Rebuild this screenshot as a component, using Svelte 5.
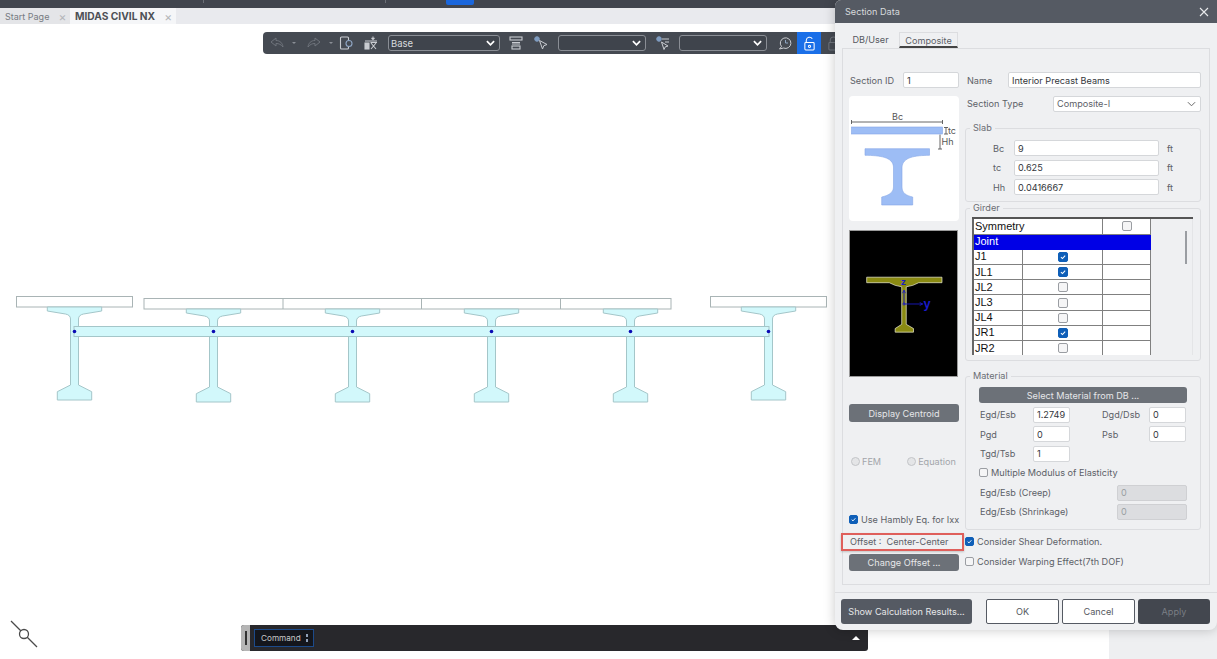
<script>
  const centers = [74.5, 213.5, 352.5, 491.5, 630.5, 768.5];
  const drops = [0, 2, 2, 2, 2, 0];
  const slabCuts = [283, 421.5, 560.5];
  const rows = [
    ['J1', true], ['JL1', true], ['JL2', false], ['JL3', false],
    ['JL4', false], ['JR1', true], ['JR2', false]
  ];

  function girder(c, d) {
    const y = (v) => v + d;
    return `M${c - 27.2} ${y(307)}H${c + 27.2}V${y(311)}L${c + 9} ${y(314)}Q${c + 4} ${y(315)} ${c + 4} ${y(319)}V${y(385)}L${c + 17.2} ${y(391.7)}V${y(400)}H${c - 17.2}V${y(391.7)}L${c - 4} ${y(385)}V${y(319)}Q${c - 4} ${y(315)} ${c - 9} ${y(314)}L${c - 27.2} ${y(311)}Z`;
  }
</script>

{#snippet box(on)}
  <span class="box" class:on>
    {#if on}
      <svg viewBox="0 0 10 10" width="100%" height="100%"><path d="M2.4 5.2 4.3 7 7.7 3.2" fill="none" stroke="#fff" stroke-width="1.3" /></svg>
    {/if}
  </span>
{/snippet}

{#snippet chevron()}
  <svg class="chev" viewBox="0 0 10 6" width="9" height="6"><path d="M1 1 5 5 9 1" fill="none" stroke="#fff" stroke-width="1.9" /></svg>
{/snippet}

<div class="page">
  <div class="topbar">
    <span class="sep s1"></span>
    <span class="sep s2"></span>
    <span class="active"></span>
  </div>

  <div class="tabstrip">
    <div class="doc-tab start">Start Page <span class="x">×</span></div>
    <div class="doc-tab current">MIDAS CIVIL NX <span class="x">×</span></div>
  </div>

  <div class="workspace">
    <main class="viewport">
      <div class="toolbar">
        <svg class="ico" viewBox="0 0 14 12" fill="none" stroke="#6f747c"><path d="M1 5 6 1V3.5C10 3.5 12.5 6 13 10 11 7.5 9 6.5 6 6.5V9Z" /></svg>
        <span class="caret"></span>
        <svg class="ico redo" viewBox="0 0 14 12" fill="none" stroke="#6f747c"><path d="M13 5 8 1V3.5C4 3.5 1.5 6 1 10 3 7.5 5 6.5 8 6.5V9Z" /></svg>
        <span class="caret"></span>
        <svg class="ico doc" viewBox="0 0 14 14" fill="none" stroke="#c9ccd1" stroke-width="1.1"><rect x="1.5" y="1" width="8" height="12" rx="1" /><circle cx="10" cy="7.5" r="3" fill="#454a52" stroke="#8fa6c4" /></svg>
        <svg class="ico tbl" viewBox="0 0 14 14" fill="none" stroke="#c9ccd1" stroke-width="1.1"><path d="M9 0.5V3M7.5 2 9 3.5 10.5 2M1 5H13" /><rect x="1" y="7" width="4" height="6" fill="#c9ccd1" /><path d="M7 7 12 13M12 7 7 13M6.5 6.5H13" /></svg>
        <div class="pick base"><span>Base</span>{@render chevron()}</div>
        <svg class="ico sec" viewBox="0 0 14 14" fill="none" stroke="#c9ccd1" stroke-width="1.1"><rect x="1" y="1" width="12" height="3" /><path d="M3 6.5H11M3 8H11" /><rect x="3" y="10" width="8" height="3" /></svg>
        <svg class="ico cur" viewBox="0 0 14 14" fill="none" stroke="#c9ccd1"><circle cx="3" cy="3" r="2.3" fill="#7f9cc0" stroke="#7f9cc0" /><path d="M5.5 4.5 13 8.5 9.8 9.7 8.5 13Z" /></svg>
        <div class="pick wide"><span></span>{@render chevron()}</div>
        <svg class="ico cur2" viewBox="0 0 14 14" fill="none" stroke="#c9ccd1"><circle cx="3" cy="3" r="2.3" fill="#7f9cc0" stroke="#7f9cc0" /><path d="M6 3H13M9 6H13M5.500 6 12 10 9.3 10.8 8 13.500Z" /></svg>
        <div class="pick wide second"><span></span>{@render chevron()}</div>
        <svg class="ico chat" viewBox="0 0 14 14" fill="none" stroke="#c9ccd1"><path d="M3.5 10.5A5.3 5.3 0 1 1 5.5 12L1.5 13Z" /><path d="M7.5 4V7H10" stroke="#8fa6c4" /></svg>
        <div class="lock on">
          <svg viewBox="0 0 14 16" width="13" height="15" fill="none" stroke="#fff" stroke-width="1.1"><path d="M3.5 7V4.5A3.5 3.5 0 0 1 10 3" /><rect x="2" y="7" width="10" height="8" rx="1" /><circle cx="7" cy="11" r="1.2" /></svg>
        </div>
        <div class="lock">
          <svg viewBox="0 0 14 16" width="13" height="15" fill="none" stroke="#6f747c" stroke-width="1.1"><path d="M3.5 7V4.5A3.5 3.5 0 0 1 10.5 4.5V7" /><rect x="2" y="7" width="10" height="8" rx="1" /></svg>
        </div>
      </div>

      <svg class="drawing" viewBox="0 54 1109 571">
        <g fill="#fff" stroke="#a9b4b5">
          <rect x="16.5" y="296.5" width="116" height="10.5" />
          <rect x="144" y="298.5" width="527" height="10.5" />
          <rect x="710.5" y="296.5" width="116" height="10.5" />
          {#each slabCuts as x}
            <path d="M{x} 298.5V309" />
          {/each}
        </g>
        <g fill="#d2f8fb" stroke="#a4c6c9">
          {#each centers as c, i}
            <path d={girder(c, drops[i])} />
          {/each}
          <rect x="74" y="326.5" width="695" height="10" />
        </g>
        <g fill="#0a0ab4">
          {#each centers as c}
            <circle cx={c} cy="331.5" r="1.8" />
          {/each}
        </g>
      </svg>

      <div class="bottom">
        <svg class="ucs" viewBox="0 0 28 28" width="28" height="28" fill="#fff" stroke="#4a4a4a" stroke-width="1.3"><path d="M1 1 27 27" /><circle cx="14" cy="14" r="4.5" /></svg>
        <div class="command">
          <span class="grip"><i></i></span>
          <div class="cmd-box">Command <span class="spin"></span></div>
          <span class="up"></span>
        </div>
      </div>
    </main>
    <aside class="sidepane"></aside>
  </div>

  <section class="dialog">
    <header>
      <span>Section Data</span>
      <svg viewBox="0 0 10 10" width="10" height="10" stroke="#e8e9eb" stroke-width="1.1"><path d="M1 1 9 9M9 1 1 9" /></svg>
    </header>

    <div class="dlg-tabs">
      <span class="dlg-tab">DB/User</span>
      <span class="dlg-tab sel">Composite</span>
    </div>

    <div class="panel">
      <div class="col-left">
        <div class="id-row">
          <label for="sid">Section ID</label>
          <input id="sid" value="1" />
        </div>

        <div class="sketch">
          <svg viewBox="849 96 110 125" width="110" height="125">
            <g stroke="#555" stroke-width="0.9" fill="none">
              <path d="M851.5 122H942.5M851.5 120V124M942.5 120V124" />
              <path d="M946 127.5V134M944 127.5H948M944 134H948" />
              <path d="M940 134.5V149M938 149H942" />
            </g>
            <rect x="851.5" y="127" width="91" height="7" fill="#9dbdf5" stroke="#84a6e6" stroke-width="0.6" />
            <path d="M865 148.7H929.5V155.3C915 155.5 903 157 902 167V187C902 193 906 195.5 912.7 197V205H881.7V197C888 195.5 893.5 193 893.5 187V167C893 157 880 155.5 865 155.3Z" fill="#9dbdf5" stroke="#84a6e6" stroke-width="0.6" />
            <g class="dim">
              <text x="892" y="120">Bc</text>
              <text x="948" y="134">tc</text>
              <text x="941.5" y="145">Hh</text>
            </g>
          </svg>
        </div>

        <div class="black">
          <svg viewBox="849 230 109 147" width="107" height="145">
            <path d="M866 276.7H942.7V282.3H919L913 285 906.3 286.5V324.7L913.7 329V332.7H895V329L901.7 324.7V286.5L895 285 889 282.3H866Z" fill="#8a8a12" stroke="#f2f2dc" stroke-width="0.7" />
            <g stroke="#1a1ac8" fill="none" stroke-width="0.9">
              <path d="M904 304V290M902.5 293 904 290 905.5 293" />
              <path d="M904 304H923M920 302.5 923 304 920 305.5" />
              <circle cx="904" cy="304" r="1.1" />
            </g>
            <text class="axis" x="901" y="285">z</text>
            <text class="axis big" x="924" y="308">y</text>
          </svg>
        </div>

        <button class="btn centroid">Display Centroid</button>

        <div class="radios">
          <span class="radio"></span><span>FEM</span>
          <span class="radio eq"></span><span>Equation</span>
        </div>

        <div class="opt hambly">{@render box(true)}<span>Use Hambly Eq. for Ixx</span></div>

        <div class="offset">Offset :&nbsp; Center-Center</div>
        <button class="btn change">Change Offset ...</button>
      </div>

      <div class="col-right">
        <div class="name-row">
          <label for="sname">Name</label>
          <input id="sname" value="Interior Precast Beams" />
        </div>

        <div class="type-row">
          <span>Section Type</span>
          <div class="combo">Composite-I
            <svg viewBox="0 0 10 6" width="9" height="6"><path d="M1 1 5 5 9 1" fill="none" stroke="#666" stroke-width="1.1" /></svg>
          </div>
        </div>

        <fieldset class="slab">
          <legend>Slab</legend>
          <div class="slab-row"><span>Bc</span><input value="9" /><span>ft</span></div>
          <div class="slab-row"><span>tc</span><input value="0.625" /><span>ft</span></div>
          <div class="slab-row"><span>Hh</span><input value="0.0416667" /><span>ft</span></div>
        </fieldset>

        <fieldset class="girder">
          <legend>Girder</legend>
          <div class="grid-wrap">
            <table>
              <colgroup><col class="c1" /><col class="c2" /><col class="c3" /></colgroup>
              <tbody>
                <tr><td colspan="2">Symmetry</td><td class="mid">{@render box(false)}</td></tr>
                <tr class="head"><td colspan="3">Joint</td></tr>
                {#each rows as [name, on]}
                  <tr><td>{name}</td><td class="mid">{@render box(on)}</td><td></td></tr>
                {/each}
              </tbody>
            </table>
            <div class="scroll"><i></i></div>
          </div>
        </fieldset>

        <fieldset class="material">
          <legend>Material</legend>
          <button class="btn select-db">Select Material from DB ...</button>
          <div class="mat-grid">
            <span>Egd/Esb</span><input value="1.2749" />
            <span class="second-label">Dgd/Dsb</span><input value="0" />
            <span>Pgd</span><input value="0" />
            <span class="second-label">Psb</span><input value="0" />
            <span>Tgd/Tsb</span><input value="1" />
          </div>
          <div class="opt multi">{@render box(false)}<span>Multiple Modulus of Elasticity</span></div>
          <div class="mod-row"><span>Egd/Esb (Creep)</span><input value="0" disabled /></div>
          <div class="mod-row"><span>Edg/Esb (Shrinkage)</span><input value="0" disabled /></div>
        </fieldset>

        <div class="opt shear">{@render box(true)}<span>Consider Shear Deformation.</span></div>
        <div class="opt warp">{@render box(false)}<span>Consider Warping Effect(7th DOF)</span></div>
      </div>
    </div>

    <footer>
      <button class="btn results">Show Calculation Results...</button>
      <button class="plain ok">OK</button>
      <button class="plain">Cancel</button>
      <button class="btn apply">Apply</button>
    </footer>
  </section>
</div>

<style>
  :global(body) {
    margin: 0;
    background: #fff;
    overflow: hidden;
  }

  .page {
    position: relative;
    width: 1217px;
    height: 659px;
    display: flex;
    flex-direction: column;
    overflow: hidden;
    font-family: Inter, "Liberation Sans", sans-serif;
    font-size: 9.15px;
    color: #5c6067;
  }

  .topbar {
    position: relative;
    height: 8px;
    background: #41454e;
    flex: none;
  }

  .sep {
    position: absolute;
    top: 0;
    width: 1px;
    height: 3px;
    background: #6b6f77;
  }

  .s1 { left: 203px; }
  .s2 { left: 385px; }

  .active {
    position: absolute;
    left: 446px;
    top: 0;
    width: 28px;
    height: 5px;
    background: #1a66dc;
    border-radius: 0 0 2px 2px;
  }

  .tabstrip {
    display: flex;
    height: 16px;
    background: #e9eaee;
    flex: none;
  }

  .doc-tab {
    display: flex;
    align-items: center;
    white-space: nowrap;
  }

  .start {
    width: 65px;
    padding-left: 5px;
    background: #e4e5e8;
    color: #777b82;
    font-size: 9px;
  }

  .current {
    width: 101px;
    padding-left: 5px;
    background: #f5f6f8;
    color: #4d5056;
    font-weight: 700;
    font-size: 10.2px;
  }

  .x {
    margin-left: 9px;
    font-size: 12px;
    font-weight: 400;
    color: #b4b6ba;
  }

  .workspace {
    flex: 1;
    display: flex;
    min-height: 0;
  }

  .viewport {
    width: 1109px;
    display: flex;
    flex-direction: column;
    background: #fff;
  }

  .sidepane {
    flex: 1;
    background: #eeeff1;
  }

  .toolbar {
    display: flex;
    align-items: center;
    width: 600px;
    height: 22px;
    margin: 8px 0 0 263px;
    padding-left: 7px;
    box-sizing: border-box;
    background: #454a52;
    border-radius: 4px 0 0 4px;
    flex: none;
  }

  .ico {
    width: 14px;
    height: 14px;
    flex: none;
  }

  .caret {
    width: 0;
    height: 0;
    margin: 1px 11px 0 8px;
    border: 2px solid transparent;
    border-top: 2.5px solid #8a8e95;
    flex: none;
  }

  .doc { margin-left: -5px; }
  .tbl { margin-left: 11px; }
  .sec { margin-left: 9px; }
  .cur { margin-left: 11px; }
  .cur2 { margin-left: 10px; }
  .chat { margin-left: 11px; }

  .pick {
    display: flex;
    align-items: center;
    justify-content: space-between;
    height: 16px;
    box-sizing: border-box;
    padding: 0 4px 0 2px;
    border: 1px solid #8a8e95;
    border-radius: 3px;
    background: #3f444c;
    color: #d8dadd;
    font-size: 9.5px;
    flex: none;
  }

  .base {
    width: 112px;
    margin-left: 10px;
  }

  .wide {
    width: 88px;
    margin-left: 10px;
  }

  .second { margin-left: 9px; }

  .lock {
    display: flex;
    align-items: center;
    justify-content: center;
    width: 24px;
    height: 22px;
    margin-left: 5px;
    flex: none;
  }

  .lock:last-child { margin-left: 0; }

  .lock.on { background: #1a6fe8; }

  .drawing {
    display: block;
    width: 1109px;
    height: 571px;
    flex: none;
  }

  .bottom {
    display: flex;
    height: 26px;
    padding-left: 10px;
    align-items: flex-start;
  }

  .ucs {
    margin: -5px 203px 0 0;
    flex: none;
    overflow: visible;
  }

  .command {
    display: flex;
    align-items: center;
    width: 627px;
    height: 26px;
    background: #28282c;
    border-radius: 3px;
    overflow: hidden;
    flex: none;
  }

  .grip {
    display: flex;
    align-items: center;
    justify-content: center;
    width: 9px;
    height: 100%;
    background: #b5b5b5;
  }

  .grip i {
    width: 2px;
    height: 14px;
    background: #333;
  }

  .cmd-box {
    display: flex;
    align-items: center;
    gap: 5px;
    height: 18px;
    box-sizing: border-box;
    margin-left: 4px;
    padding: 0 5px 0 6px;
    border: 1px solid #1c4a8a;
    background: #14161c;
    color: #c8c8c8;
    font-size: 8.2px;
  }

  .spin {
    width: 2px;
    height: 8px;
    background: linear-gradient(#8fa0b8 0 3px, transparent 3px 5px, #8fa0b8 5px);
  }

  .up {
    width: 0;
    height: 0;
    margin-left: 538px;
    border: 4px solid transparent;
    border-top: none;
    border-bottom: 4px solid #fff;
    flex: none;
  }

  /* dialog floats over the viewport */
  .dialog {
    position: absolute;
    left: 835px;
    top: 0;
    width: 382px;
    height: 630px;
    box-sizing: border-box;
    display: flex;
    flex-direction: column;
    background: #eff0f2;
    border-radius: 6px 0 8px 8px;
    box-shadow: 0 0 12px rgba(0, 0, 0, 0.22);
    overflow: hidden;
  }

  header {
    display: flex;
    align-items: center;
    justify-content: space-between;
    height: 23px;
    padding: 0 8px 0 10px;
    background: #555a63;
    color: #d8dadd;
    flex: none;
  }

  .dlg-tabs {
    display: flex;
    height: 16px;
    margin: 9px 0 0 7px;
    flex: none;
  }

  .dlg-tab {
    width: 57px;
    line-height: 15px;
    text-align: center;
    color: #55585e;
  }

  .dlg-tab.sel {
    width: 59px;
    box-sizing: border-box;
    border: 1px solid #dcdde0;
    border-bottom: 2px solid #444;
    color: #5c6067;
  }

  .panel {
    display: flex;
    gap: 6px;
    width: 368px;
    height: 537px;
    box-sizing: border-box;
    margin-left: 7px;
    padding: 23px 0 0 6px;
    border: 1px solid #dcdde0;
    flex: none;
  }

  .col-left {
    display: flex;
    flex-direction: column;
    width: 110px;
    flex: none;
  }

  .col-right {
    display: flex;
    flex-direction: column;
    width: 236px;
    flex: none;
  }

  input {
    height: 16px;
    box-sizing: border-box;
    min-width: 0;
    padding: 0 3px;
    border: 1px solid #d5d7da;
    border-radius: 2px;
    background: #fff;
    color: #33363b;
    font: inherit;
    outline: none;
  }

  input:disabled {
    background: #dcdde0;
    border-color: #cfd0d3;
    color: #9a9da2;
  }

  .id-row {
    display: flex;
    align-items: center;
    justify-content: space-between;
    height: 16px;
    padding-left: 1px;
  }

  .id-row input { width: 56px; }

  .sketch {
    height: 125px;
    margin-top: 8px;
    background: #fff;
    border-radius: 4px;
    overflow: hidden;
  }

  .sketch svg, .black svg { display: block; }

  .dim text {
    font-family: Inter, "Liberation Sans", sans-serif;
    font-size: 9px;
    fill: #555;
  }

  .black {
    width: 109px;
    height: 147px;
    box-sizing: border-box;
    margin-top: 9px;
    background: #000;
    border: 1px solid #9a9a9a;
  }

  .axis {
    font-family: "Liberation Sans", sans-serif;
    font-size: 10px;
    font-weight: 700;
    fill: #1a1ac8;
  }

  .axis.big { font-size: 13px; }

  .btn {
    border: none;
    border-radius: 3px;
    background: #6c7178;
    color: #e6e7e9;
    font: inherit;
    padding: 0;
  }

  .centroid {
    height: 18px;
    margin-top: 27px;
  }

  .radios {
    display: flex;
    align-items: center;
    height: 12px;
    margin-top: 33px;
    padding-left: 2px;
    color: #a2a5aa;
  }

  .radio {
    width: 9px;
    height: 9px;
    box-sizing: border-box;
    margin-right: 2px;
    border: 1px solid #c3c5c8;
    border-radius: 50%;
    background: #e4e5e7;
  }

  .radio.eq { margin-left: 26px; }

  .opt {
    display: flex;
    align-items: center;
    gap: 3px;
    height: 12px;
    white-space: nowrap;
  }

  .opt .box {
    width: 9px;
    height: 9px;
  }

  .hambly { margin-top: 46px; }

  .box {
    display: flex;
    width: 10px;
    height: 10px;
    box-sizing: border-box;
    border: 1px solid #9a9da2;
    border-radius: 2px;
    background: #f5f5f6;
    overflow: hidden;
    flex: none;
  }

  .box.on {
    border-color: #0f5fb8;
    background: #0f5fb8;
  }

  .offset {
    height: 18px;
    line-height: 14px;
    box-sizing: border-box;
    width: 123px;
    margin: 7.5px 0 0 -8px;
    padding-left: 7px;
    border: 2px solid #df5f5b;
    box-shadow: 0 1px 2px rgba(0, 0, 0, 0.2);
    white-space: nowrap;
  }

  .change {
    height: 17px;
    margin-top: 3px;
  }

  .name-row {
    display: flex;
    align-items: center;
    justify-content: space-between;
    height: 16px;
    padding-left: 2px;
  }

  .name-row input { width: 193px; }

  .type-row {
    display: flex;
    align-items: center;
    justify-content: space-between;
    height: 16px;
    margin-top: 7.5px;
    padding-left: 2px;
  }

  .combo {
    display: flex;
    align-items: center;
    justify-content: space-between;
    width: 148px;
    height: 16px;
    box-sizing: border-box;
    padding: 0 4px 0 3px;
    border: 1px solid #d5d7da;
    border-radius: 2px;
    background: #fff;
  }

  fieldset {
    margin: 0;
    padding: 0;
    border: 1px solid #dcdde0;
    border-radius: 3px;
    min-width: 0;
  }

  legend {
    margin-left: 4px;
    padding: 0 3px;
    line-height: 12px;
    color: #6a6d73;
  }

  .slab {
    margin-top: 10.5px;
    padding: 6px 0;
  }

  .slab-row {
    display: grid;
    grid-template-columns: 21px 145px auto;
    align-items: center;
    padding-left: 27px;
  }

  .slab-row + .slab-row { margin-top: 3.5px; }

  .slab-row span:last-child { padding-left: 8px; }

  .girder { padding: 3px 0 5px 6px; }

  .girder legend { margin-left: -2px; }

  .grid-wrap {
    display: flex;
    width: 221px;
    height: 136px;
    border-top: 2px solid #555;
    overflow: hidden;
  }

  table {
    width: 177px;
    height: max-content;
    table-layout: fixed;
    border-collapse: collapse;
    background: #fff;
    border-left: 2px solid #666;
    font-family: "Liberation Sans", sans-serif;
    font-size: 11px;
    color: #111;
    flex: none;
  }

  .c1 { width: 49px; }
  .c2 { width: 80px; }
  .c3 { width: 48px; }

  td {
    height: 15.2px;
    box-sizing: border-box;
    padding: 0 0 0 1px;
    border: 1px solid #808080;
    border-left-color: #a0a0a0;
    line-height: 13px;
  }

  tr:first-child td { border-top: none; }

  td.mid .box { margin: 0 auto; }

  .head td {
    background: #0000e6;
    border-color: #0000e6;
    color: #fff;
  }

  .scroll {
    flex: 1;
    position: relative;
    border-right: 1px solid #e4e5e7;
  }

  .scroll i {
    position: absolute;
    left: 34px;
    top: 12px;
    width: 2px;
    height: 33px;
    background: #9a9da2;
  }

  .material {
    margin-top: 9px;
    padding: 5px 13px 9px 13px;
  }

  .material legend { margin-left: -9px; }

  .select-db {
    display: block;
    width: 208px;
    height: 16px;
  }

  .mat-grid {
    display: grid;
    grid-template-columns: 53px 37px 32px 47px 37px;
    grid-auto-rows: 16px;
    row-gap: 3.5px;
    align-items: center;
    margin: 3.5px 0 0 1px;
  }

  .second-label {
    margin-left: 32px;
    grid-column: 3 / 5;
  }

  .multi { margin-top: 5px; }

  .mod-row {
    display: flex;
    align-items: center;
    justify-content: space-between;
    height: 16px;
    margin: 6px 0 0 1px;
  }

  .mod-row + .mod-row { margin-top: 3px; }

  .mod-row input { width: 70px; }

  .shear { margin-top: 6px; }
  .warp { margin-top: 8px; }

  footer {
    display: flex;
    height: 37px;
    margin-top: 7px;
    padding: 6px 7px 0 6px;
    border-top: 1px solid #dcdde0;
    box-sizing: border-box;
    flex: none;
  }

  footer button { height: 25px; }

  .results {
    width: 131px;
    background: #555a63;
    white-space: nowrap;
  }

  .plain {
    width: 73px;
    margin-left: 3px;
    padding: 0;
    border: 1px solid #555a63;
    border-radius: 2px;
    background: #fff;
    color: #55585e;
    font: inherit;
  }

  .ok { margin-left: 14px; }

  .apply {
    width: 72px;
    margin-left: 3px;
    background: #43474f;
    color: #7a7e85;
  }
</style>
